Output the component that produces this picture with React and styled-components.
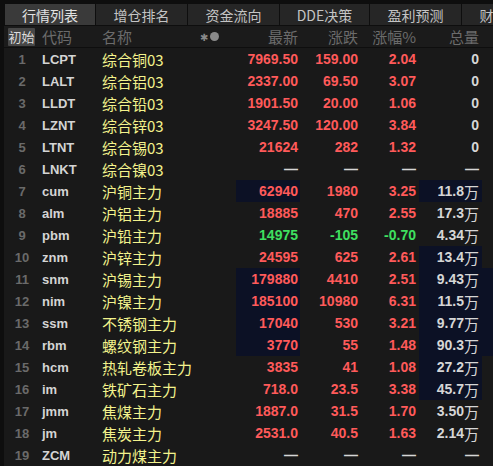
import React from "react";
import styled, { createGlobalStyle } from "styled-components";

const GlobalStyle = createGlobalStyle`
  html, body {
    margin: 0;
    padding: 0;
    background: #191919;
    overflow: hidden;
  }
`;

const Container = styled.div`
  width: 493px;
  height: 466px;
  overflow: hidden;
  background: #191919;
  border-left: 4px solid #0e0e0e;
  box-sizing: border-box;
  font-family: "Liberation Sans", "Noto Sans CJK SC", sans-serif;
`;

const TabBar = styled.div`
  display: flex;
  height: 21px;
  border-top: 4px solid #0e0e0e;
  border-bottom: 1px solid #0e0e0e;
  padding-left: 1px;
  background: #0e0e0e;
  gap: 1px;
`;

const Tab = styled.div`
  flex: 0 0 ${(p) => p.$w}px;
  display: flex;
  align-items: center;
  justify-content: center;
  background: ${(p) => (p.$active ? "#3a3a3a" : "#262626")};
  color: ${(p) => (p.$active ? "#e2e2e2" : "#c4c4c4")};
  font-family: "Noto Sans CJK SC", sans-serif;
  font-size: 14px;
  white-space: nowrap;
  overflow: hidden;
`;

const Grid = styled.div`
  display: grid;
  grid-template-columns: 34px 64px 134px 64px 60px 59px 63px 63px;
  grid-auto-rows: 22px;
`;

const HeaderRow = styled.div`
  display: contents;
`;

const HeadCell = styled.div`
  display: flex;
  align-items: center;
  justify-content: ${(p) => p.$align || "flex-start"};
  padding: ${(p) => p.$pad || "0"};
  color: #6b6b6b;
  font-family: "Noto Sans CJK SC", sans-serif;
  font-size: 15px;
  border-bottom: 1px solid #0e0e0e;
  background: #1b1b1b;
  white-space: nowrap;
`;

const InitButton = styled.span`
  display: inline-flex;
  align-items: center;
  justify-content: center;
  width: 27px;
  height: 18px;
  background: #474747;
  color: #dcdcdc;
  font-size: 13px;
  border-radius: 1px;
`;

const Marks = styled.span`
  display: inline-flex;
  align-items: center;
  gap: 2px;
  color: #8a8a8a;
  margin-left: 68px;
`;

const Star = styled.span`
  font-size: 10px;
`;

const Dot = styled.span`
  width: 9px;
  height: 9px;
  border-radius: 50%;
  background: #8a8a8a;
`;

const Cell = styled.div`
  display: flex;
  align-items: center;
  white-space: nowrap;
  overflow: hidden;
  background: ${(p) => (p.$hl ? "#0c1125" : "transparent")};
`;

const NumCell = styled(Cell)`
  justify-content: center;
  color: #6a6a6a;
  font-weight: bold;
  font-size: 13px;
  padding-left: 2px;
`;

const CodeCell = styled(Cell)`
  padding-left: 4px;
  color: #d4d4d4;
  font-weight: bold;
  font-size: 13px;
`;

const NameCell = styled(Cell)`
  color: #f3f38c;
  font-family: "Noto Sans CJK SC", sans-serif;
  font-size: 15px;
`;

const Value = styled(Cell)`
  justify-content: flex-end;
  padding-right: ${(p) => p.$pr || 2}px;
  font-weight: bold;
  font-size: 14px;
  color: ${(p) =>
    p.$tone === "up" ? "#ff5a5a" : p.$tone === "down" ? "#3fe060" : "#d6d6d6"};
`;

const Wan = styled.span`
  font-family: "Noto Sans CJK SC", sans-serif;
  font-weight: normal;
  font-size: 15px;
`;

const rows = [
  ["LCPT", "综合铜03", "7969.50", "159.00", "2.04", "0"],
  ["LALT", "综合铝03", "2337.00", "69.50", "3.07", "0"],
  ["LLDT", "综合铅03", "1901.50", "20.00", "1.06", "0"],
  ["LZNT", "综合锌03", "3247.50", "120.00", "3.84", "0"],
  ["LTNT", "综合锡03", "21624", "282", "1.32", "0"],
  ["LNKT", "综合镍03", null, null, null, null],
  ["cum", "沪铜主力", "62940", "1980", "3.25", "11.8万", [1, 1, 0]],
  ["alm", "沪铝主力", "18885", "470", "2.55", "17.3万"],
  ["pbm", "沪铅主力", "14975", "-105", "-0.70", "4.34万"],
  ["znm", "沪锌主力", "24595", "625", "2.61", "13.4万", [0, 1, 0]],
  ["snm", "沪锡主力", "179880", "4410", "2.51", "9.43万", [1, 1, 1]],
  ["nim", "沪镍主力", "185100", "10980", "6.31", "11.5万", [1, 1, 1]],
  ["ssm", "不锈钢主力", "17040", "530", "3.21", "9.77万", [1, 1, 1]],
  ["rbm", "螺纹钢主力", "3770", "55", "1.48", "90.3万", [1, 1, 1]],
  ["hcm", "热轧卷板主力", "3835", "41", "1.08", "27.2万", [0, 1, 0]],
  ["im", "铁矿石主力", "718.0", "23.5", "3.38", "45.7万", [0, 1, 0]],
  ["jmm", "焦煤主力", "1887.0", "31.5", "1.70", "3.50万"],
  ["jm", "焦炭主力", "2531.0", "40.5", "1.63", "2.14万"],
  ["ZCM", "动力煤主力", null, null, null, null],
];

const tabs = [
  ["行情列表", 90],
  ["增仓排名", 91],
  ["资金流向", 91],
  ["DDE决策", 89],
  ["盈利预测", 91],
  ["财务数据", 91],
];

const Dash = "—";

const renderVolume = (v) => {
  if (!v) return Dash;
  if (v.endsWith("万")) {
    return (
      <>
        {v.slice(0, -1)}
        <Wan>万</Wan>
      </>
    );
  }
  return v;
};

const App = () => {
  return (
    <Container>
      <GlobalStyle />
      <TabBar>
        {tabs.map(([t, w], i) => (
          <Tab key={t} $w={w} $active={i === 0}>
            {t}
          </Tab>
        ))}
      </TabBar>
      <Grid>
        <HeaderRow>
          <HeadCell $pad="0 0 0 4px">
            <InitButton>初始</InitButton>
          </HeadCell>
          <HeadCell $pad="0 0 0 4px">代码</HeadCell>
          <HeadCell>
            名称
            <Marks>
              <Star>✱</Star>
              <Dot />
            </Marks>
          </HeadCell>
          <HeadCell $align="flex-end" $pad="0 2px 0 0">最新</HeadCell>
          <HeadCell $align="flex-end" $pad="0 2px 0 0">涨跌</HeadCell>
          <HeadCell $align="flex-end" $pad="0 3px 0 0">涨幅%</HeadCell>
          <HeadCell $align="flex-end" $pad="0 3px 0 0">总量</HeadCell>
          <HeadCell />
        </HeaderRow>
        {rows.map(([code, name, last, chg, pct, vol, hl = [0, 0, 0]], i) => {
          const tone = !last ? "none" : chg.startsWith("-") ? "down" : "up";
          return (
            <React.Fragment key={code}>
              <NumCell>{i + 1}</NumCell>
              <CodeCell>{code}</CodeCell>
              <NameCell>{name}</NameCell>
              <Value $tone={tone} $hl={hl[0]}>{last || Dash}</Value>
              <Value $tone={tone}>{chg || Dash}</Value>
              <Value $tone={tone} $pr={3}>{pct || Dash}</Value>
              <Value $pr={3} $hl={vol && hl[1]}>
                {renderVolume(vol)}
              </Value>
              <Value $hl={hl[2]} />
            </React.Fragment>
          );
        })}
      </Grid>
    </Container>
  );
};

export default App;
